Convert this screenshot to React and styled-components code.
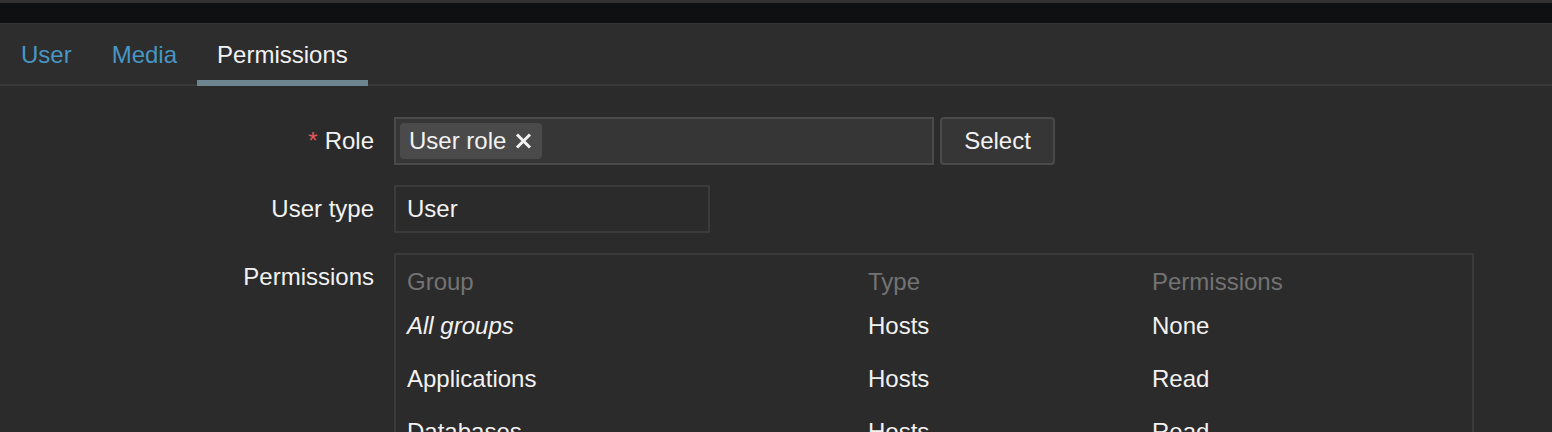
import React from "react";
import styled, { createGlobalStyle } from "styled-components";

const GlobalStyle = createGlobalStyle`
  html, body {
    margin: 0;
    padding: 0;
    background: #2b2b2b;
    color: #f2f2f2;
    font-family: "Liberation Sans", Arial, sans-serif;
    font-size: 24px;
    line-height: 24px;
  }
  * { box-sizing: border-box; }
`;

const Page = styled.div`
  display: flex;
  flex-direction: column;
  min-height: 432px;
  overflow: hidden;
`;

const TopStrip = styled.div`
  height: 3px;
  background: #313131;
`;

const DarkBar = styled.div`
  height: 20px;
  background: #0e1012;
`;

const TabNav = styled.nav`
  display: flex;
  height: 63px;
  padding-left: 1px;
  background: #2d2d2d;
  border-top: 1px solid #333333;
  border-bottom: 2px solid #383838;
`;

const Tab = styled.a`
  display: flex;
  align-items: center;
  height: 62px;
  margin-bottom: -2px;
  padding: 6px 20px 0;
  border-bottom: 6px solid ${(p) => (p.$active ? "#6d8591" : "transparent")};
  color: ${(p) => (p.$active ? "#f2f2f2" : "#4796c4")};
  text-decoration: none;
  cursor: pointer;
`;

const Form = styled.div`
  display: grid;
  grid-template-columns: 374px 1fr;
  column-gap: 20px;
  row-gap: 20px;
  padding-top: 31px;
  align-items: start;
`;

const Label = styled.label`
  text-align: right;
  height: 48px;
  display: flex;
  align-items: center;
  justify-content: flex-end;
  white-space: nowrap;
  ${(p) => p.$top && `align-items: flex-start; padding-top: 12px;`}
`;

const Asterisk = styled.span`
  color: #e45959;
  margin-right: 7px;
`;

const FieldRow = styled.div`
  display: flex;
  gap: 6px;
`;

const MultiSelect = styled.div`
  width: 540px;
  height: 48px;
  padding: 4px;
  background: #363636;
  border: 2px solid #4a4a4a;
  display: flex;
  align-items: center;
`;

const TagPill = styled.span`
  display: inline-flex;
  align-items: center;
  height: 36px;
  padding: 0 10px 0 9px;
  gap: 9px;
  background: #4a4a4a;
  border-radius: 4px;
  color: #f2f2f2;
`;

const Button = styled.button`
  width: 115px;
  height: 48px;
  background: #363636;
  border: 2px solid #4a4a4a;
  border-radius: 4px;
  color: #f2f2f2;
  font: inherit;
  padding: 0;
`;

const ReadOnlyInput = styled.div`
  width: 316px;
  height: 48px;
  border: 2px solid #3b3b3b;
  padding: 0 11px;
  display: flex;
  align-items: center;
`;

const TableBox = styled.div`
  width: 1080px;
  border: 2px solid #3a3a3a;
  padding: 5px 0 40px 11px;
`;

const Row = styled.div`
  display: grid;
  grid-template-columns: 461px 284px 1fr;
  height: ${(p) => (p.$head ? "44px" : "53px")};
  padding-top: 10px;
  color: ${(p) => (p.$head ? "#737373" : "#f2f2f2")};
`;

const Cell = styled.div`
  height: 24px;
  white-space: nowrap;
  font-style: ${(p) => (p.$italic ? "italic" : "normal")};
`;

const CloseIcon = () => (
  <svg width="17" height="16" viewBox="0 0 17 16">
    <path
      d="M2 1.5 L15 14.5 M15 1.5 L2 14.5"
      stroke="#f2f2f2"
      strokeWidth="3"
      strokeLinecap="butt"
    />
  </svg>
);

const rows = [
  { group: "All groups", type: "Hosts", perm: "None", italic: true },
  { group: "Applications", type: "Hosts", perm: "Read" },
  { group: "Databases", type: "Hosts", perm: "Read" },
];

export default function App() {
  return (
    <Page>
      <GlobalStyle />
      <TopStrip />
      <DarkBar />
      <TabNav>
        <Tab>User</Tab>
        <Tab>Media</Tab>
        <Tab $active>Permissions</Tab>
      </TabNav>
      <Form>
        <Label>
          <Asterisk>*</Asterisk>Role
        </Label>
        <FieldRow>
          <MultiSelect>
            <TagPill>
              User role
              <CloseIcon />
            </TagPill>
          </MultiSelect>
          <Button>Select</Button>
        </FieldRow>

        <Label>User type</Label>
        <ReadOnlyInput>User</ReadOnlyInput>

        <Label $top>Permissions</Label>
        <TableBox>
          <Row $head>
            <Cell>Group</Cell>
            <Cell>Type</Cell>
            <Cell>Permissions</Cell>
          </Row>
          {rows.map((r) => (
            <Row key={r.group}>
              <Cell $italic={r.italic}>{r.group}</Cell>
              <Cell>{r.type}</Cell>
              <Cell>{r.perm}</Cell>
            </Row>
          ))}
        </TableBox>
      </Form>
    </Page>
  );
}
